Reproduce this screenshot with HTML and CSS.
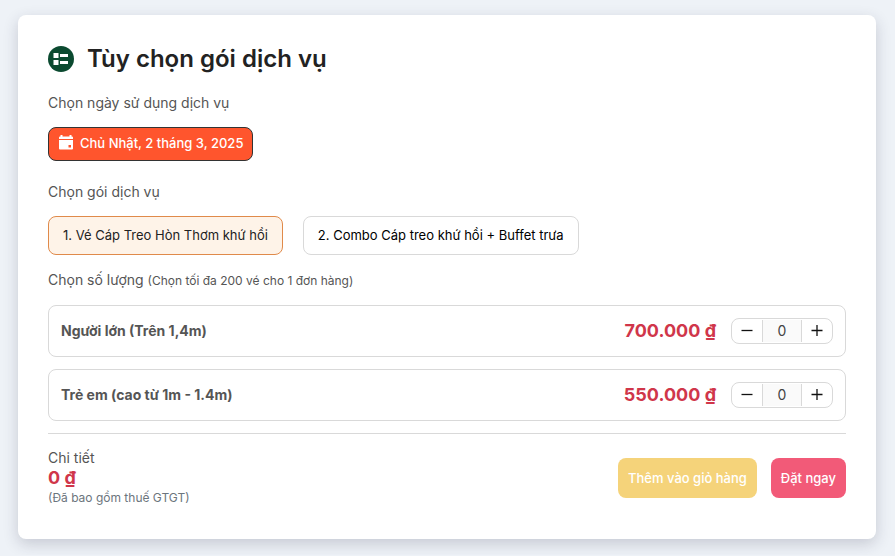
FILE: index.html
```html
<!DOCTYPE html>
<html lang="vi">
<head>
    <meta charset="UTF-8">
    <meta name="viewport" content="width=device-width, initial-scale=1.0">
    <title>Tùy chọn gói dịch vụ</title>
    <link rel="stylesheet" href="styles.css">
</head>
<body>
    <form class="booking">
        <h2 class="booking_tit">
            <svg class="tit_icon" viewBox="0 0 26 26" aria-hidden="true">
                <circle cx="13" cy="13" r="13" fill="#0b4a30"/>
                <path fill="#fff" d="M5.500 7h5v5h-5zM5.500 14h5v5h-5zM12 8h8v3h-8zM12 15h8v3h-8z"/>
            </svg>
            Tùy chọn gói dịch vụ
        </h2>

        <p class="label">Chọn ngày sử dụng dịch vụ</p>
        <button type="button" class="date_btn">
            <svg class="date_icon" viewBox="0 0 16 16" aria-hidden="true">
                <path fill="#fff" d="M2.500 0h2v1.500h7V0h2v1.500H14a1 1 0 0 1 1 1V4H1V2.500a1 1 0 0 1 1-1h.5z"/>
                <path fill="#fff" fill-rule="evenodd" d="M1 5h14v8.500a1 1 0 0 1-1 1H2a1 1 0 0 1-1-1zM10.500 10v2.500H13V10z"/>
            </svg>
            Chủ Nhật, 2 tháng 3, 2025
        </button>

        <p class="label label_pack">Chọn gói dịch vụ</p>
        <div class="packs">
            <button type="button" class="pack active">1. Vé Cáp Treo Hòn Thơm khứ hồi</button>
            <button type="button" class="pack">2. Combo Cáp treo khứ hồi + Buffet trưa</button>
        </div>

        <p class="label label_qty">Chọn số lượng <small>(Chọn tối đa 200 vé cho 1 đơn hàng)</small></p>
        <div class="ticket">
            <label class="ticket_name" for="adult">Người lớn (Trên 1,4m)</label>
            <span class="price">700.000 ₫</span>
            <div class="qty">
                <button type="button" class="qty_btn" aria-label="Giảm">
                    <svg viewBox="0 0 12 12"><path d="M.5 5.500h11"/></svg>
                </button>
                <input type="text" class="qty_num" id="adult" value="0">
                <button type="button" class="qty_btn" aria-label="Tăng">
                    <svg viewBox="0 0 12 12"><path d="M.5 5.500h11M6 0v11"/></svg>
                </button>
            </div>
        </div>
        <div class="ticket">
            <label class="ticket_name" for="child">Trẻ em (cao từ 1m - 1.4m)</label>
            <span class="price">550.000 ₫</span>
            <div class="qty">
                <button type="button" class="qty_btn" aria-label="Giảm">
                    <svg viewBox="0 0 12 12"><path d="M.5 5.500h11"/></svg>
                </button>
                <input type="text" class="qty_num" id="child" value="0">
                <button type="button" class="qty_btn" aria-label="Tăng">
                    <svg viewBox="0 0 12 12"><path d="M.5 5.500h11M6 0v11"/></svg>
                </button>
            </div>
        </div>

        <div class="summary">
            <div class="total">
                <p class="label label_total">Chi tiết</p>
                <p class="price">0 ₫</p>
                <p class="note">(Đã bao gồm thuế GTGT)</p>
            </div>
            <button type="button" class="btn btn_cart">Thêm vào giỏ hàng</button>
            <button type="button" class="btn btn_book">Đặt ngay</button>
        </div>
    </form>
</body>
</html>
```
FILE: styles.css
```css
* { box-sizing: border-box; margin: 0; padding: 0; }
body { padding: 15px 19px 16px 18px; background-color: #eef2f7; font-family: Inter, "Liberation Sans", sans-serif; font-size: 14px; line-height: 20px; color: #555; }
button, input { font: inherit; }
button { cursor: pointer; font-size: 13px; }

.booking { padding: 30px 30px 31px; background-color: #fff; border-radius: 8px; box-shadow: 0 5px 15px rgba(40, 40, 70, 0.2); }
.booking_tit { display: flex; align-items: center; gap: 13px; margin-bottom: 20px; font-size: 24px; line-height: 28px; font-weight: 600; color: #222; }
.tit_icon { width: 26px; height: 26px; }

.label { margin-bottom: 14px; }
.label_pack { margin-top: 21px; }
.label_qty { margin-top: 15px; }
.label small { font-size: 12px; }

.date_btn { display: flex; align-items: center; gap: 6px; height: 34px; padding: 0 9px 2px; border: 1px solid #333; border-radius: 8px; background-color: #ff552d; color: #fff; font-weight: 500; }
.date_icon { width: 16px; height: 16px; }

.packs { display: flex; flex-wrap: wrap; gap: 20px; }
.pack { height: 39px; padding: 0 14px 2px; border: 1px solid #d9d9d9; border-radius: 8px; background-color: #fff; color: #000; }
.pack.active { border-color: #e08a4a; background-color: #fef3e8; color: #222; }

.ticket { display: flex; align-items: center; gap: 15px; height: 52px; margin-bottom: 12px; padding: 0 12px; border: 1px solid #d9d9d9; border-radius: 8px; }
.ticket_name { flex: 1; font-weight: 700; }
.price { font-size: 18px; font-weight: 700; color: #d0364a; }

.qty { display: flex; align-items: center; height: 26px; border: 1px solid #d9d9d9; border-radius: 8px; }
.qty_btn { display: flex; align-items: center; justify-content: center; width: 30px; height: 24px; border: 0; background: none; }
.qty_btn svg { width: 12px; height: 12px; fill: none; stroke: #111; stroke-width: 1.3; }
.qty_num { width: 40px; height: 22px; padding-bottom: 2px; border: 1px solid #d9d9d9; border-width: 0 1px; background-color: #fafafa; text-align: center; color: #444; }

.summary { display: flex; align-items: center; gap: 14px; padding-top: 14px; border-top: 1px solid #d9d9d9; }
.total { flex: 1; }
.label_total { margin-bottom: 0; }
.note { font-size: 12px; color: #6c757d; }
.btn { height: 40px; padding: 0 10px; border: 0; border-radius: 8px; color: #fff; font-weight: 500; }
.btn_cart { background-color: #f5d37a; }
.btn_book { background-color: #f25a78; }
```
